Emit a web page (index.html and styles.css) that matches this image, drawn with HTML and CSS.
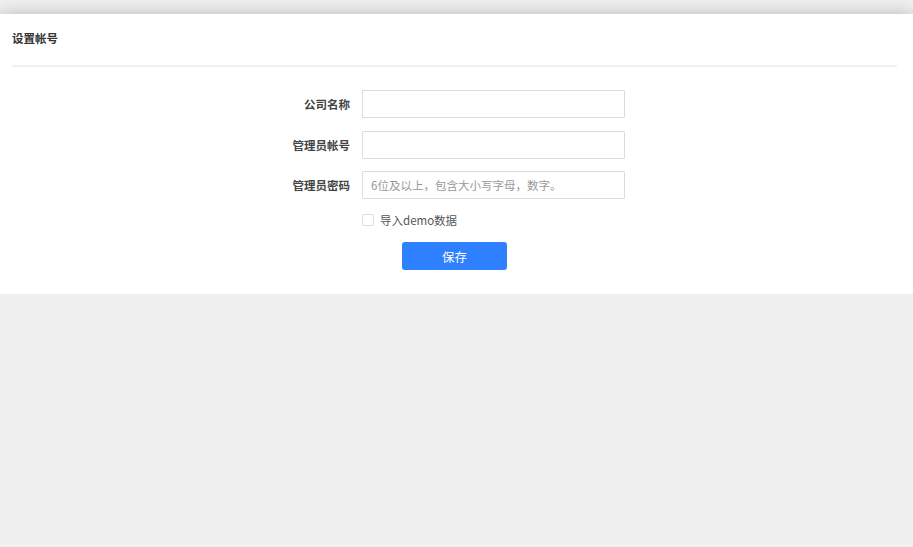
FILE: index.html
```html
<!DOCTYPE html>
<html lang="zh-CN">
<head>
    <meta charset="UTF-8">
    <title>设置帐号</title>
    <link rel="stylesheet" href="styles.css">
</head>
<body>
    <div class="panel">
        <div class="panel-title">设置帐号</div>

        <!-- account form -->
        <form class="setup-form" onsubmit="return false">
            <div class="form-row">
                <label class="form-label">公司名称</label>
                <input class="form-input" type="text">
            </div>
            <div class="form-row">
                <label class="form-label">管理员帐号</label>
                <input class="form-input" type="text">
            </div>
            <div class="form-row">
                <label class="form-label">管理员密码</label>
                <input class="form-input" type="password" placeholder="6位及以上，包含大小写字母，数字。">
            </div>
            <div class="form-row check-row">
                <span class="form-label"></span>
                <label class="check"><input type="checkbox"><span>导入demo数据</span></label>
            </div>
            <div class="form-actions">
                <button class="button" type="submit">保存</button>
            </div>
        </form>
    </div>
</body>
</html>
```

FILE: styles.css
```css
html, body {
    margin: 0;
    padding: 0;
}
body {
    background-color: #f0f0f0;
    font-family: "Noto Sans CJK SC", "Noto Sans", sans-serif;
    font-size: 12px;
    color: #333;
    padding-top: 14px;
}
.panel {
    background-color: #fff;
    box-shadow: 0 0 16px rgba(0, 0, 0, 0.24);
    padding: 0 16px 24px 12px;
    height: 280px;
    box-sizing: border-box;
}
.panel-title {
    font-size: 11.5px;
    font-weight: bold;
    line-height: 16px;
    padding: 16px 0 19px;
    border-bottom: 2px solid #f0f0f0;
}
.setup-form {
    padding-top: 23px;
}
.form-row {
    display: flex;
    align-items: center;
    margin-bottom: 12.5px;
}
.form-label {
    width: 100px;
    margin-left: 238px;
    margin-right: 12px;
    text-align: right;
    font-size: 11.5px;
    font-weight: bold;
    color: #444;
}
.form-input {
    width: 263px;
    height: 28px;
    box-sizing: border-box;
    border: 1px solid #dcdcdc;
    border-radius: 1px;
    padding: 0 8px;
    font-family: inherit;
    font-size: 11.5px;
    color: #333;
    outline: none;
}
.form-input::placeholder {
    color: #999;
}
.check-row {
    margin-top: 13px;
    margin-bottom: 14px;
}
.check {
    display: flex;
    align-items: center;
    font-size: 11.5px;
    color: #555;
    line-height: 16px;
}
.check input {
    appearance: none;
    width: 12px;
    height: 12px;
    margin: 0 6px 0 0;
    border: 1px solid #dcdcdc;
    border-radius: 2px;
    background-color: #fff;
}
.form-actions {
    display: flex;
    justify-content: center;
}
.button {
    width: 105px;
    height: 28px;
    background-color: #2f80ff;
    color: #fff;
    border: none;
    border-radius: 3px;
    font-family: inherit;
    font-size: 12.5px;
    cursor: pointer;
}
.button:hover {
    background-color: #1f6fe8;
}
```
